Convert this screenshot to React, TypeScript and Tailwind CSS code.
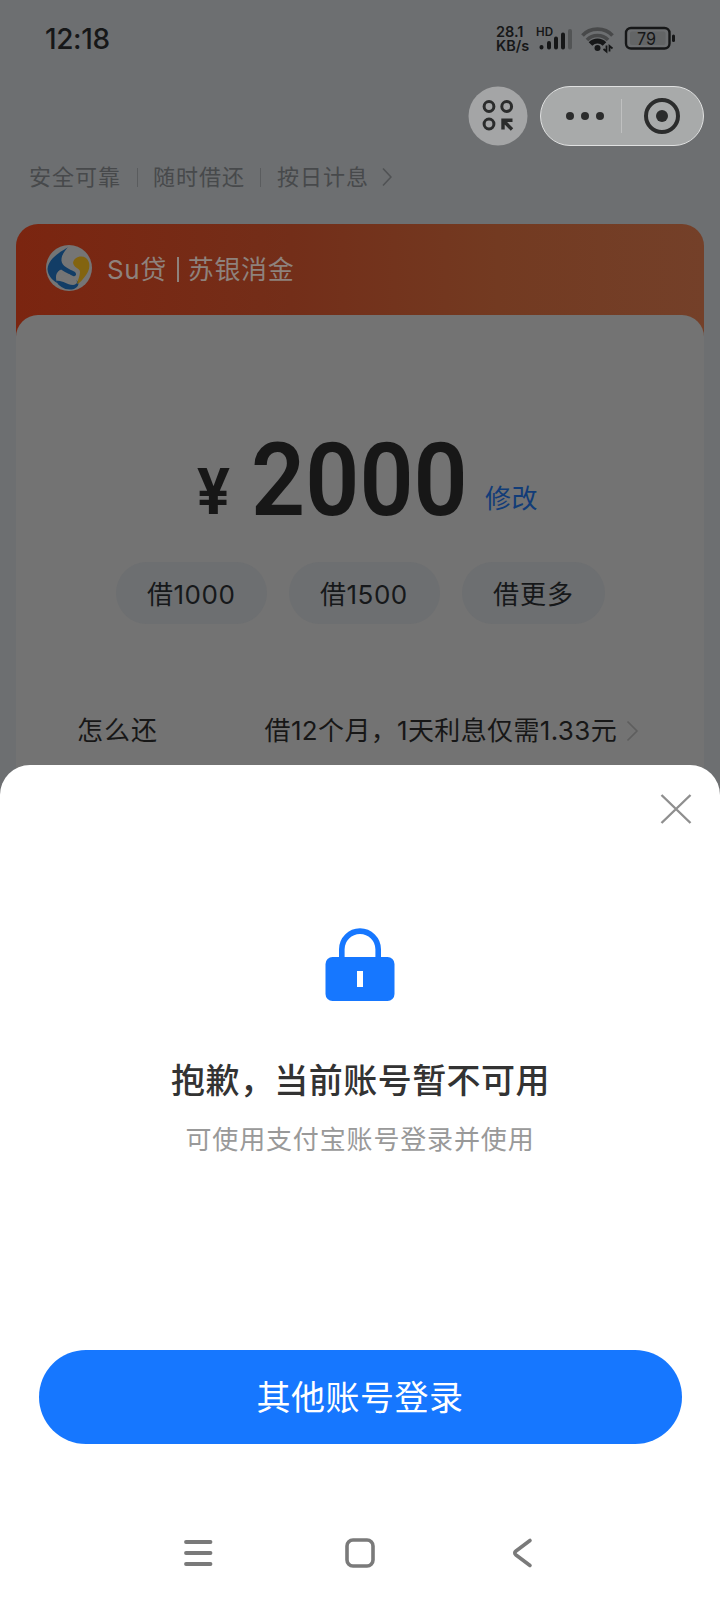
import React from "react";

const FONT = "font-['Inter','Noto_Sans_CJK_SC',sans-serif]";

function StatusBar() {
  return (
    <div className="flex h-[78px] items-center justify-between pl-[45px] pr-[44px] text-[#161718]">
      <span className="text-[28px] font-medium leading-[34px] tracking-[-0.4px]">12:18</span>
      <div className="flex items-center">
        <div className="mr-[6px] w-[34px] whitespace-nowrap text-[14.5px] font-semibold leading-[14px]">
          <div>28.1</div>
          <div>KB/s</div>
        </div>
        <svg width="140" height="30" viewBox="536 24 140 30" fill="none">
          <text x="536" y="36" fontSize="11.5" fontWeight="600" fill="#161718" textLength="17" lengthAdjust="spacingAndGlyphs">HD</text>
          <g stroke="#161718" strokeWidth="4" strokeLinecap="round">
            <path d="M541.500 47.500V47M549 47.500V43M556 47.500V38.500M563 47.500V34.500" />
            <path d="M570 47.500V31" stroke="#525455" />
          </g>
          <g strokeWidth="3.6">
            <path d="M582.500 35.500C590 27 605 27 612.500 35.500" stroke="#48494a" />
            <path d="M587 40C592.500 34 602.500 34 608 40" stroke="#48494a" />
            <path d="M590.500 44C594.500 40 600.500 40 604.500 44" stroke="#161718" strokeWidth="5" />
          </g>
          <circle cx="597.500" cy="48" r="3" fill="#161718" />
          <path d="M606.500 45.500V51.500L603.500 49M609.500 51.500V46L612.500 48.500" stroke="#161718" strokeWidth="1.800" />
          <rect x="626" y="28" width="43.500" height="20.500" rx="5" stroke="#161718" strokeWidth="2.400" />
          <rect x="630" y="31.500" width="35.500" height="13.500" rx="2" fill="#636566" />
          <rect x="672" y="34.500" width="3" height="7.500" rx="1.500" fill="#161718" />
          <text x="637" y="45" fontSize="17.500" fill="#161718" textLength="19" lengthAdjust="spacingAndGlyphs">79</text>
        </svg>
      </div>
    </div>
  );
}

function Capsule() {
  return (
    <div className="flex h-[76px] items-start justify-end gap-[12px] pr-[16px] pt-[8px]">
      <svg width="60" height="60" viewBox="468 86 60 60" fill="none">
        <circle cx="498" cy="116" r="29.500" fill="#a4a5a6" />
        <g stroke="#2b2c2c" strokeWidth="3">
          <circle cx="489" cy="106.500" r="4.900" />
          <circle cx="506.700" cy="106.500" r="4.900" />
          <circle cx="489" cy="124" r="4.900" />
          <path d="M503 129.500V120.200H512.500M503.500 120.700L512 129.500" strokeWidth="3.400" />
        </g>
      </svg>
      <div className="flex h-[60px] w-[164px] items-center rounded-full border border-[#e0e1e1] bg-[#a8aaaa]">
        <div className="-mt-px ml-[25px] flex gap-[7px]">
          <i className="size-[8px] rounded-full bg-[#2b2c2c]" />
          <i className="size-[8px] rounded-full bg-[#2b2c2c]" />
          <i className="size-[8px] rounded-full bg-[#2b2c2c]" />
        </div>
        <div className="ml-[17px] h-[34px] w-px bg-[#bfc0c0]" />
        <div className="-mt-px ml-[22px] flex size-[36px] items-center justify-center rounded-full border-4 border-[#2b2c2c]">
          <i className="size-[12px] rounded-full bg-[#2b2c2c]" />
        </div>
      </div>
    </div>
  );
}

function Tags() {
  return (
    <div className="flex h-[46px] items-center pl-[29px] text-[22px] leading-[32px] tracking-[1px] text-[#47494b]">
      <span className="w-[108px]">安全可靠</span>
      <i className="h-[19px] w-px bg-[#5a5c5e]" />
      <span className="ml-[15px] w-[107px]">随时借还</span>
      <i className="h-[19px] w-px bg-[#5a5c5e]" />
      <span className="ml-[16px] w-[105px]">按日计息</span>
      <svg width="10" height="20" viewBox="0 0 10 20" fill="none" stroke="#505254" strokeWidth="1.600">
        <path d="M1 1.500L9 10L1 18.500" />
      </svg>
    </div>
  );
}

function BankLogo() {
  return (
    <svg className="-mt-[3px]" width="46" height="46" viewBox="0 0 46 46">
      <circle cx="23" cy="23" r="23" fill="#757575" />
      <path d="M22 2C19 5 3 11 1.500 24C2 30 5 34 11 38C9 32 10 28 13 26L15 24.500L19 27L27 31C30 32 31 29 29 27C23 24 16 21 15.500 16C15 10 19 6 22 2Z" fill="#123d66" />
      <path d="M10 36C17 35 20 40 27 40C31 39.500 32 37 30 35C34 37 33 42 28 44C20 46 13 42 10 36Z" fill="#123d66" />
      <path d="M27 18C28 12 35 10 40 13C45 17 44 25 40 30C37 34 34 38 31 39C32 34 34 31 34 27C34 23 29 24 27 18Z" fill="#836410" />
      <path d="M12 27L14 25L16 26L19 31L23 29L29 35L21 36L15 34L17 31Z" fill="#757575" />
    </svg>
  );
}

function LoanCard() {
  return (
    <div className="mx-[16px] mt-[24px] h-[560px] rounded-t-[22px] bg-[linear-gradient(90deg,#7b2510_0%,#732e19_40%,#733a21_70%,#744029_100%)] bg-[length:100%_112px] bg-no-repeat">
      <div className="flex h-[91px] items-center pl-[30px] text-[26px] leading-[36px] tracking-[0.6px] text-[#8e827d]">
        <BankLogo />
        <span className="ml-[15px] flex items-center whitespace-nowrap">
          Su贷
          <i className="ml-[10px] mr-[9px] h-[25px] w-[2px] bg-[#8e827d]" />
          苏银消金
        </span>
      </div>
      <div className="h-[469px] rounded-t-[22px] bg-[#737373] pt-[110px]">
        <div className="flex h-[110px] pl-[181px] font-['Roboto']">
          <span className="mt-[22px] w-[60px] origin-left scale-x-[0.96] text-[64px] font-bold leading-[92px] text-[#171717]">¥</span>
          <span className="-ml-[6px] w-[230px] origin-left scale-x-[0.93] text-[102px] font-semibold leading-[111px] text-[#171717]">2000</span>
          <span className="ml-[4px] mt-[56px] font-['Inter','Noto_Sans_CJK_SC',sans-serif] text-[26px] leading-[36px] tracking-[0.5px] text-[#113c78]">修改</span>
        </div>
        <div className="ml-[100px] mt-[27px] flex h-[62px] gap-[22px] text-[26px] leading-[65px] tracking-[0.5px] text-[#16181a]">
          <div className="w-[151px] rounded-full bg-[#6d6f71] pl-[31px]">借1000</div>
          <div className="w-[151px] rounded-full bg-[#6d6f71] pl-[31px]">借1500</div>
          <div className="w-[143px] rounded-full bg-[#6d6f71] pl-[31px] tracking-[1px]">借更多</div>
        </div>
        <div className="mt-[89px] flex h-[36px] items-center pl-[61px] pr-[65px] text-[26px] leading-[36px] text-[#171717]">
          <span className="tracking-[1px]">怎么还</span>
          <span className="ml-auto mr-[9px] whitespace-nowrap tracking-[0.35px]">借12个月，1天利息仅需1.33元</span>
          <svg width="13" height="22" viewBox="0 0 13 22" fill="none" stroke="#5e5e5e" strokeWidth="1.600">
            <path d="M1.500 1.500L11 11L1.500 20.500" />
          </svg>
        </div>
      </div>
    </div>
  );
}

function Sheet() {
  return (
    <div className="absolute inset-x-0 bottom-0 flex h-[835px] flex-col items-center rounded-t-[30px] bg-white">
      <button className="mr-[28px] mt-[29px] self-end" aria-label="关闭">
        <svg width="32" height="30" viewBox="0 0 32 30" fill="none" stroke="#8f8f8f" strokeWidth="2.400">
          <path d="M1.500 1L30.500 29M30.500 1L1.500 29" />
        </svg>
      </button>
      <svg className="mt-[103px]" width="70" height="75" viewBox="0 0 70 75" fill="none">
        <path d="M16.800 34V22.300A18.200 18.200 0 0 1 53.200 22.300V34" stroke="#1677ff" strokeWidth="5.600" />
        <rect x="0.500" y="30" width="69" height="44" rx="7" fill="#1677ff" />
        <rect x="32" y="44" width="6" height="16" fill="#fff" />
      </svg>
      <h1 className="ml-[1px] mt-[57px] text-[34px] font-medium leading-[44px] tracking-[0.45px] text-[#333]">抱歉，当前账号暂不可用</h1>
      <p className="mt-[19px] text-[26px] leading-[36px] tracking-[0.85px] text-[#999]">可使用支付宝账号登录并使用</p>
      <button className="mt-[192px] h-[94px] w-[643px] rounded-full bg-[#1677ff] text-[34px] leading-[95px] tracking-[0.5px] text-white">其他账号登录</button>
      <div className="mt-[93px] flex w-full items-center pl-[183px]">
        <svg width="30" height="32" viewBox="0 0 30 32" fill="none" stroke="#7a7a7a" strokeWidth="3.800" strokeLinecap="round">
          <path d="M3 5H27.500M3 16H27.500M3 27H27.500" />
        </svg>
        <svg className="ml-[131px]" width="32" height="32" viewBox="0 0 32 32" fill="none" stroke="#7a7a7a" strokeWidth="3.600">
          <rect x="3" y="3" width="26" height="26" rx="6" />
        </svg>
        <svg className="ml-[135px]" width="22" height="32" viewBox="0 0 22 32" fill="none" stroke="#7a7a7a" strokeWidth="3.600" strokeLinecap="round" strokeLinejoin="round">
          <path d="M19 3.500L5 14Q2.500 16 5 18L19 28.500" />
        </svg>
      </div>
    </div>
  );
}

export default function App() {
  return (
    <div className={`relative h-[1600px] w-[720px] overflow-hidden bg-[#6d6f71] ${FONT}`}>
      <StatusBar />
      <Capsule />
      <Tags />
      <LoanCard />
      <Sheet />
    </div>
  );
}
